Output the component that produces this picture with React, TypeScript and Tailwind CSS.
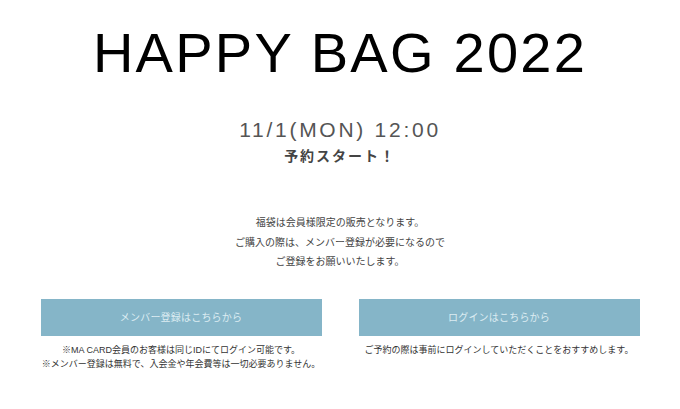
import React from 'react'

const font = { fontFamily: '"Liberation Sans", "Noto Sans CJK JP", sans-serif' }

const App = () => {
  return (
    <div className="min-h-screen bg-white text-[#333]" style={font}>
      <div className="pt-[25px] text-center">
        <h1 className="text-[56px] leading-[56px] font-normal tracking-[0.04em] text-black">
          HAPPY BAG 2022
        </h1>
        <p className="mt-[38px] text-[21px] leading-[21px] tracking-[0.13em] text-[#555]">
          11/1(MON) 12:00
        </p>
        <p className="mt-[6px] text-[14px] leading-[20px] font-bold tracking-[0.14em] text-[#444]">
          予約スタート！
        </p>
        <div className="mt-[47px] text-[10px] leading-[19.5px] text-[#444]">
          <p>福袋は会員様限定の販売となります。</p>
          <p>ご購入の際は、メンバー登録が必要になるので</p>
          <p>ご登録をお願いいたします。</p>
        </div>
      </div>

      <div className="mx-auto mt-[27px] grid w-[599px] grid-cols-2 gap-x-[37px]">
        <div>
          <a className="flex h-[37px] items-center justify-center bg-[#85b5c8] text-[10px] tracking-[0.02em] text-[#dcecf2]">
            メンバー登録はこちらから
          </a>
          <div className="mt-[7px] text-center text-[9px] leading-[14px] text-[#333]">
            <p>※MA CARD会員のお客様は同じIDにてログイン可能です。</p>
            <p>※メンバー登録は無料で、入会金や年会費等は一切必要ありません。</p>
          </div>
        </div>
        <div>
          <a className="flex h-[37px] items-center justify-center bg-[#85b5c8] text-[10px] tracking-[0.02em] text-[#dcecf2]">
            ログインはこちらから
          </a>
          <div className="mt-[7px] text-center text-[9px] leading-[14px] text-[#333]">
            <p>ご予約の際は事前にログインしていただくことをおすすめします。</p>
          </div>
        </div>
      </div>
    </div>
  )
}

export default App
